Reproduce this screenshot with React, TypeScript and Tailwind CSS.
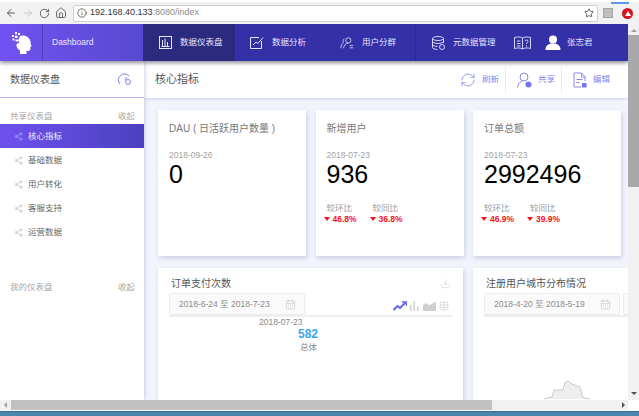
import React from 'react';
import {
  ArrowLeft,
  ArrowRight,
  RotateCw,
  Home,
  Info,
  Star,
  Share2,
  RefreshCw,
  Download,
  CalendarDays,
  Table,
} from 'lucide-react';

const FONT = "font-['Liberation_Sans','Noto_Sans_CJK_SC',sans-serif]";

const menuItems = ['核心指标', '基础数据', '用户转化', '客服支持', '运营数据'];

function BrainLogo() {
  return (
    <svg width="20" height="22" viewBox="0 0 20 22" fill="white">
      <path d="M8 4c5-1.500 10 1.500 10.500 6 .2 2 .3 2.500 1 3.800.3.600-.3 1-1.200 1.200v2.500c0 1-1 1.500-2.300 1.400l-1.500-.2V22H8v-3.500C5.500 17 4 14.500 4.500 12l3-1.500L6 8.500 8 4z" />
      <rect x="3" y="0" width="2" height="2" />
      <rect x="6" y="1" width="2" height="2" />
      <rect x="0" y="3" width="2" height="2" />
      <rect x="3" y="3.500" width="2.500" height="2.500" />
      <rect x="0.500" y="6.500" width="2" height="2" />
      <rect x="3.500" y="7.500" width="2.500" height="2" />
    </svg>
  );
}

function NavItem({ icon, label, width, active, border }: { icon: React.ReactNode; label: string; width: string; active?: boolean; border?: boolean }) {
  return (
    <div
      className={`flex items-center h-full gap-[8px] pl-[15px] ${width} ${active ? 'bg-[#2c2a7f]' : ''} ${border ? 'border-r border-[#2b2896]' : ''}`}
    >
      <span className="w-[14px] flex justify-center shrink-0">{icon}</span>
      <span className="text-[8.500px] text-[#e6e5ff] whitespace-nowrap">{label}</span>
    </div>
  );
}

function ActionBtn({ icon, label, border }: { icon: React.ReactNode; label: string; border?: boolean }) {
  return (
    <div className={`flex items-center gap-[6px] h-[24px] pr-[6px] ${border ? 'border-r border-[#e8e8f0] mr-[11px]' : ''}`}>
      {icon}
      <span className="text-[8.500px] text-[#8587f2]">{label}</span>
    </div>
  );
}

function Compare({ label, value }: { label: string; value: string }) {
  return (
    <div className="w-[46px]">
      <div className="text-[8.500px] leading-[11px] text-[#a0a0a0]">{label}</div>
      <div className="flex items-center gap-[3px] -ml-[3px] leading-[10px]">
        <span className="w-0 h-0 border-x-[3.500px] border-x-transparent border-t-[4px] border-t-[#f5121c]" />
        <span className="text-[8.500px] font-bold text-[#f5121c] whitespace-nowrap">{value}</span>
      </div>
    </div>
  );
}

function KpiCard({ title, date, value, compare }: { title: string; date: string; value: string; compare?: [string, string] }) {
  return (
    <div className="w-[148px] h-[146px] bg-white shadow-[1px_2px_5px_rgba(120,125,170,0.35)] pl-[11px] pt-[13px] shrink-0">
      <div className="text-[10px] leading-[12px] text-[#777] whitespace-nowrap">{title}</div>
      <div className="mt-[15px] text-[8.500px] leading-[10px] text-[#a2a2a2]">{date}</div>
      <div className="text-[25px] leading-[28px] text-black">{value}</div>
      {compare && (
        <div className="flex mt-[15px]">
          <Compare label="较环比" value={compare[0]} />
          <Compare label="较同比" value={compare[1]} />
        </div>
      )}
    </div>
  );
}

function DatePicker({ text }: { text: string }) {
  return (
    <div className="w-[136px] h-[22px] shrink-0 flex items-center justify-between pl-[9px] pr-[8px] bg-[#fafafa] border border-[#ececec] rounded-[2px]">
      <span className="text-[8.500px] text-[#8a8a8a] whitespace-nowrap">{text}</span>
      <CalendarDays size={11} className="text-[#c8c8c8]" strokeWidth={1.500} />
    </div>
  );
}

export default function App() {
  return (
    <div className={`w-[639px] h-[416px] overflow-hidden flex flex-col bg-white ${FONT}`}>
      {/* browser toolbar */}
      <div className="h-[24px] shrink-0 bg-[#f2f2f2] border-t-2 border-white flex items-center pl-[5px] pr-[6px] relative">
        <ArrowLeft size={12} className="text-[#5a5a5a] mr-[5px]" strokeWidth={2} />
        <ArrowRight size={12} className="text-[#c9c9c9] mr-[5px]" strokeWidth={2} />
        <RotateCw size={11} className="text-[#5a5a5a] mr-[5px]" strokeWidth={2} />
        <Home size={12} className="text-[#5a5a5a] mr-[6px]" strokeWidth={1.800} />
        <div className="w-[526px] h-[17px] bg-white border border-[#cfcfcf] rounded-[2px] flex items-center pl-[3px] pr-[3px]">
          <Info size={10} className="text-[#555] mr-[3px]" strokeWidth={2} />
          <span className="text-[9px] text-[#333]">
            192.168.40.133<span className="text-[#8a8a8a]">:8080/index</span>
          </span>
          <Star size={10} className="text-[#444] ml-auto" strokeWidth={2} />
        </div>
        <div className="w-[10px] h-[10px] ml-[5px] bg-[#bdbdbd] border border-[#a5a5a5]" />
        <div className="w-[11px] h-[11px] ml-[9px] rounded-full bg-[#d6141c] flex items-center justify-center">
          <span className="w-0 h-0 border-x-[3px] border-x-transparent border-b-[5px] border-b-white" />
        </div>
        <div className="absolute top-0 right-[10px] w-[18px] h-[2px] bg-[#5d9be8]" />
      </div>

      <div className="flex flex-1 min-h-0">
        <div className="w-[628px] shrink-0 flex flex-col overflow-hidden">
          {/* header */}
          <div className="h-[37px] shrink-0 flex bg-[#3330a8] shadow-[0_2px_4px_rgba(30,30,60,0.5)] relative z-20">
            <div className="w-[143px] flex bg-gradient-to-r from-[#7252f2] to-[#5849cf]">
              <div className="w-[43px] border-r border-[#4f3fb8] flex items-center justify-center pl-[2px]">
                <BrainLogo />
              </div>
              <div className="flex items-center pl-[9px] text-[8.500px] text-[#ece9ff]">Dashboard</div>
            </div>
            <NavItem
              active
              width="w-[92px]"
              icon={
                <svg width="13" height="13" viewBox="0 0 13 13" fill="none" stroke="#e6e5ff" strokeWidth="1">
                  <rect x="0.500" y="0.500" width="12" height="12" />
                  <path d="M3.500 10.500V4M6 10.500V2.500M8.500 10.500V6M10.500 10.500H2.500" />
                </svg>
              }
              label="数据仪表盘"
            />
            <NavItem
              width="w-[90px]"
              icon={
                <svg width="14" height="13" viewBox="0 0 14 13" fill="none" stroke="#e6e5ff" strokeWidth="1">
                  <path d="M9 1.500H.5v11h11V5" />
                  <path d="M3 9l3-3 2 1.500 5-6" />
                </svg>
              }
              label="数据分析"
            />
            <NavItem
              width="w-[91px]"
              border
              icon={
                <svg width="16" height="14" viewBox="0 0 16 14" fill="none" stroke="#e6e5ff" strokeWidth="0.900">
                  <circle cx="9.500" cy="4" r="3" />
                  <path d="M4 13c.5-3.500 2.500-5.500 5-5.500M11 10h4M11 12.500h4M1 13c0-3 1-5 3-6.500-.8-1.500-.5-3.500 1-4.500" />
                </svg>
              }
              label="用户分群"
            />
            <NavItem
              width="w-[98px]"
              icon={
                <svg width="13" height="14" viewBox="0 0 13 14" fill="none" stroke="#e6e5ff" strokeWidth="0.900">
                  <ellipse cx="6" cy="2.500" rx="5.500" ry="2" />
                  <path d="M.5 2.500v9c0 1 2.500 2 5 2M11.500 2.500V7M.5 5.500c0 1 2.500 2 5.500 2s5.500-1 5.500-2M.5 8.500c0 1 2.500 2 5 2" />
                  <circle cx="10" cy="11" r="2.500" />
                </svg>
              }
              label="元数据管理"
            />
            <div className="flex items-center">
              <svg width="17" height="14" viewBox="0 0 17 14" fill="none" stroke="#e6e5ff" strokeWidth="0.900">
                <path d="M.5 1.500c3-.8 5.500-.8 8 .5 2.500-1.300 5-1.300 8-.5v11c-3-.8-5.500-.8-8 .5-2.500-1.300-5-1.300-8-.5zM8.500 2v11M3 5h3.500M3 7.500h3.500M3 10h3.500" />
                <path d="M11 5c.5-1.500 3-1.300 3 .3 0 1.200-1.500 1.200-1.500 2.700M12.500 9.500v1" />
              </svg>
              <svg width="16" height="15" viewBox="0 0 16 15" fill="white" className="ml-[14px]">
                <circle cx="8" cy="4.500" r="4" />
                <path d="M0.500 15c0-4 2-5.500 5-6.500h5c3 1 5 2.500 5 6.500z" />
              </svg>
              <span className="ml-[6px] text-[8.500px] text-[#e6e5ff] whitespace-nowrap">张志君</span>
            </div>
          </div>

          <div className="flex flex-1 min-h-0">
            {/* sidebar */}
            <div className="w-[144px] shrink-0 bg-white shadow-[1px_0_4px_rgba(120,125,170,0.35)] relative z-10">
              <div className="h-[37px] flex items-center justify-between pl-[10px] pr-[12px] border-b border-[#b3b1f2]">
                <span className="text-[10px] text-[#555]">数据仪表盘</span>
                <svg width="14" height="13" viewBox="0 0 14 13" fill="none" stroke="#7f80f0" strokeWidth="1">
                  <path d="M2 11A5.500 5.500 0 1 1 11 3M7 7l2-3" />
                  <circle cx="10" cy="9" r="2.500" />
                </svg>
              </div>
              <div className="flex items-center justify-between pl-[10px] pr-[9px] h-[26px] pt-[10px]">
                <span className="text-[8.500px] text-[#a8a8a8]">共享仪表盘</span>
                <span className="text-[8.500px] text-[#a8a8a8]">收起</span>
              </div>
              {menuItems.map((item, i) => (
                <div
                  key={item}
                  className={`h-[24px] flex items-center pl-[14px] gap-[5px] ${
                    i === 0 ? 'bg-gradient-to-r from-[#6e52ee] to-[#4c40bf]' : ''
                  }`}
                >
                  <Share2 size={9} className={i === 0 ? 'text-[#c8c2f5]' : 'text-[#aaa]'} strokeWidth={1.300} />
                  <span className={`text-[8.500px] ${i === 0 ? 'text-[#f0eeff]' : 'text-[#666]'}`}>{item}</span>
                </div>
              ))}
              <div className="flex items-center justify-between pl-[10px] pr-[9px] mt-[37px] h-[12px]">
                <span className="text-[8.500px] text-[#a8a8a8]">我的仪表盘</span>
                <span className="text-[8.500px] text-[#a8a8a8]">收起</span>
              </div>
            </div>

            {/* content */}
            <div className="flex-1 min-w-0 bg-[#f3f5fd] overflow-hidden">
              <div className="h-[37px] bg-white shadow-[0_1px_3px_rgba(120,125,170,0.3)] flex items-center justify-between pl-[11px] pr-[12px]">
                <span className="text-[11px] text-[#555]">核心指标</span>
                <div className="flex items-center">
                  <ActionBtn border icon={<RefreshCw size={16} className="text-[#8587f2]" strokeWidth={1.200} />} label="刷新" />
                  <ActionBtn
                    border
                    icon={
                      <svg width="15" height="16" viewBox="0 0 15 16" fill="none" stroke="#8587f2" strokeWidth="1">
                        <circle cx="7" cy="5" r="4" />
                        <path d="M.5 15.500c.3-3.500 2-5.500 4.500-6.500" />
                        <circle cx="11.500" cy="12.500" r="3" fill="#7476ee" stroke="none" />
                      </svg>
                    }
                    label="共享"
                  />
                  <ActionBtn
                    icon={
                      <svg width="14" height="16" viewBox="0 0 14 16" fill="none" stroke="#8587f2" strokeWidth="1">
                        <path d="M8 15H1V1h7.500L12 4.500V9M8.500 1v4H12M3.500 7.500h6M3.500 10.500h3" />
                        <rect x="9" y="11" width="4.500" height="4.500" fill="#7476ee" stroke="none" />
                      </svg>
                    }
                    label="编辑"
                  />
                </div>
              </div>

              <div className="flex gap-[9.500px] pl-[14px] mt-[12px]">
                <KpiCard title="DAU ( 日活跃用户数量 )" date="2018-09-26" value="0" />
                <KpiCard title="新增用户" date="2018-07-23" value="936" compare={['46.8%', '36.8%']} />
                <KpiCard title="订单总额" date="2018-07-23" value="2992496" compare={['46.9%', '39.9%']} />
              </div>

              <div className="flex gap-[10px] pl-[14px] mt-[12px]">
                <div className="w-[305px] h-[200px] shrink-0 bg-white shadow-[1px_2px_5px_rgba(120,125,170,0.35)] px-[11px] pt-[9px]">
                  <div className="flex justify-between items-center h-[12px] pl-[2px] pr-[1px]">
                    <span className="text-[10px] text-[#555]">订单支付次数</span>
                    <Download size={11} className="text-[#cfcfcf]" strokeWidth={1.300} />
                  </div>
                  <div className="flex items-end justify-between mt-[4px] pr-[3px]">
                    <DatePicker text="2018-6-24 至 2018-7-23" />
                    <div className="flex items-center gap-[3px] pb-[4px]">
                      <svg width="14" height="10" viewBox="0 0 14 10" fill="none" stroke="#6663ee" strokeWidth="2">
                        <path d="M0.500 9l4-4 2.500 2 5.500-5.500" />
                        <path d="M9 1h4.500v4" strokeWidth="1.500" />
                      </svg>
                      <svg width="10" height="10" viewBox="0 0 10 10" fill="#cfcfcf">
                        <rect x="0" y="4" width="1.500" height="6" />
                        <rect x="3.500" y="0" width="1.500" height="10" />
                        <rect x="7" y="5.500" width="1.500" height="4.500" />
                      </svg>
                      <svg width="13" height="9" viewBox="0 0 13 9" fill="#cfcfcf">
                        <path d="M0 9V3l3-2 3 2 3-1 2-2 2 1v8z" />
                      </svg>
                      <Table size={10} className="text-[#cfcfcf]" strokeWidth={1.600} />
                    </div>
                  </div>
                  <div className="h-[2px] bg-[#eeeeee]" />
                  <div className="pl-[90px] text-[8.500px] leading-[10px] text-[#8a8a8a]">2018-07-23</div>
                  <div className="pl-[129px] text-[12px] font-bold leading-[14px] text-[#3ba6e8]">582</div>
                  <div className="pl-[131px] text-[8.500px] leading-[12px] text-[#8a8a8a]">总体</div>
                </div>

                <div className="w-[260px] h-[200px] shrink-0 bg-white shadow-[1px_2px_5px_rgba(120,125,170,0.35)] pl-[11px] pt-[9px]">
                  <div className="h-[12px] pl-[2px] flex items-center">
                    <span className="text-[10px] text-[#555]">注册用户城市分布情况</span>
                  </div>
                  <div className="flex gap-[3px] mt-[4px]">
                    <DatePicker text="2018-4-20 至 2018-5-19" />
                    <DatePicker text="" />
                  </div>
                  <div className="h-[2px] bg-[#eeeeee]" />
                  <svg width="47" height="20" viewBox="0 0 47 20" fill="#eeeeee" stroke="#bdbdbd" strokeWidth="0.800" className="mt-[64px] ml-[60px]">
                    <path d="M0 18l8-2 2-7 9 0 2-7 3-2 4 3 8 3 2 8 2 3 6 1" />
                  </svg>
                </div>
              </div>
            </div>
          </div>
        </div>

        {/* vertical scrollbar */}
        <div className="w-[11px] shrink-0 bg-[#f1f1f1] flex flex-col items-center">
          <span className="mt-[5px] w-0 h-0 border-x-[3px] border-x-transparent border-b-[3px] border-b-[#a0a0a0]" />
          <div className="w-full h-[152px] bg-[#a9a9a9] mt-[3px]" />
          <span className="mt-auto mb-[5px] w-0 h-0 border-x-[3px] border-x-transparent border-t-[3px] border-t-[#505050]" />
        </div>
      </div>

      {/* horizontal scrollbar */}
      <div className="h-[10px] shrink-0 flex bg-white">
        <div className="w-[628px] bg-[#f1f1f1] flex items-center">
          <span className="ml-[4px] w-0 h-0 border-y-[3px] border-y-transparent border-r-[3px] border-r-[#a0a0a0]" />
          <div className="w-[481px] h-full bg-[#c1c1c1] ml-[4px]" />
          <span className="ml-auto mr-[3px] w-0 h-0 border-y-[3px] border-y-transparent border-l-[3px] border-l-[#505050]" />
        </div>
      </div>
      <div className="h-[1px] shrink-0 bg-white" />
      {/* window edge */}
      <div className="h-[5px] shrink-0 bg-[#4a86ad] border-t border-[#2f6d96]" />
    </div>
  );
}
